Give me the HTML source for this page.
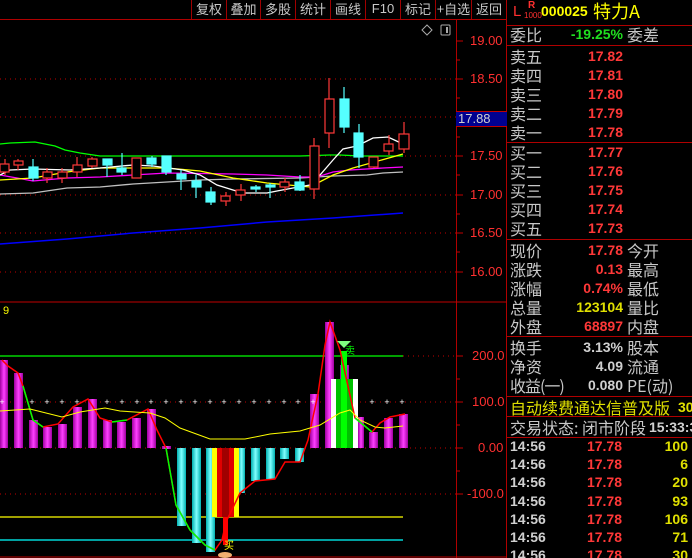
<!DOCTYPE html>
<html><head><meta charset="utf-8"><style>
*{margin:0;padding:0;box-sizing:border-box}
html,body{width:692px;height:558px;overflow:hidden}
body{background:#000;position:relative;font-family:"Liberation Sans","Noto Sans CJK SC",sans-serif}
.t{position:absolute;white-space:nowrap}
.lb{color:#c8c8c8;font-size:16px;line-height:19px;font-family:"Noto Sans CJK SC","WenQuanYi Zen Hei",sans-serif}
.v{position:absolute;white-space:nowrap;font-weight:bold;font-size:14px;line-height:19px;text-align:right;width:80px;left:543px}
.r{color:#ff3838}.g{color:#20e020}.y{color:#e0e000}.w{color:#d0d0d0}
.btn{position:absolute;top:0;height:19px;color:#c8c8c8;font-size:13px;line-height:18px;text-align:center;border-left:1px solid #a00000;font-family:"Noto Sans CJK SC",sans-serif}
.hl{position:absolute;background:#b00000;height:1px}
.ax{position:absolute;color:#ff3030;font-size:13px;left:470px}
</style></head><body>
<div class="btn" style="left:191px;width:35px">复权</div>
<div class="btn" style="left:226px;width:34px">叠加</div>
<div class="btn" style="left:260px;width:35px">多股</div>
<div class="btn" style="left:295px;width:35px">统计</div>
<div class="btn" style="left:330px;width:35px">画线</div>
<div class="btn" style="left:365px;width:35px;font-family:'Liberation Sans',sans-serif">F10</div>
<div class="btn" style="left:400px;width:35px">标记</div>
<div class="btn" style="left:435px;width:36px">+自选</div>
<div class="btn" style="left:471px;width:35px">返回</div>
<div class="hl" style="left:0;top:19px;width:507px"></div>
<div style="position:absolute;left:506px;top:0;width:1px;height:558px;background:#b00000"></div>
<div style="position:absolute;left:456px;top:19px;width:1px;height:539px;background:#b00000"></div>

<svg width="507" height="558" style="position:absolute;left:0;top:0">
<g stroke="#c00000" stroke-dasharray="1,4" stroke-width="1">
<line x1="0" y1="79" x2="456" y2="79"/><line x1="0" y1="117" x2="456" y2="117"/><line x1="0" y1="156" x2="456" y2="156"/><line x1="0" y1="195" x2="456" y2="195"/><line x1="0" y1="233" x2="456" y2="233"/><line x1="0" y1="272" x2="456" y2="272"/>
<line x1="403" y1="356" x2="456" y2="356"/><line x1="0" y1="402" x2="456" y2="402"/><line x1="0" y1="448" x2="456" y2="448"/><line x1="0" y1="494" x2="456" y2="494"/>
</g>
<g stroke="#c00000"><line x1="456" y1="41" x2="463" y2="41"/><line x1="456" y1="60" x2="460" y2="60"/><line x1="456" y1="79" x2="463" y2="79"/><line x1="456" y1="98" x2="460" y2="98"/><line x1="456" y1="137" x2="460" y2="137"/><line x1="456" y1="156" x2="463" y2="156"/><line x1="456" y1="175" x2="460" y2="175"/><line x1="456" y1="195" x2="463" y2="195"/><line x1="456" y1="214" x2="460" y2="214"/><line x1="456" y1="233" x2="463" y2="233"/><line x1="456" y1="252" x2="460" y2="252"/><line x1="456" y1="272" x2="463" y2="272"/>
<line x1="456" y1="356" x2="463" y2="356"/><line x1="456" y1="379" x2="460" y2="379"/><line x1="456" y1="402" x2="463" y2="402"/><line x1="456" y1="425" x2="460" y2="425"/><line x1="456" y1="448" x2="463" y2="448"/><line x1="456" y1="471" x2="460" y2="471"/><line x1="456" y1="494" x2="463" y2="494"/>
<line x1="0" y1="302" x2="507" y2="302"/><line x1="0" y1="557" x2="507" y2="557"/></g>
<path d="M427 25 L432 30 L427 35 L422 30Z" fill="none" stroke="#aaa"/>
<rect x="441" y="25" width="9" height="10" rx="1" fill="none" stroke="#aaa"/><rect x="446" y="27" width="2" height="6" fill="#aaa"/>
<polyline fill="none" stroke="#0000ff" stroke-width="1.5" points="0,244 67,239 133,233 200,228 267,222 333,218 403,213"/>
<polyline fill="none" stroke="#c0c0c0" stroke-width="1.3" points="0,194 33,193 67,188 100,187 133,184 167,182 200,180 233,179 300,178 333,176 367,175 383,173 403,172"/>
<polyline fill="none" stroke="#ff00ff" stroke-width="1.3" points="0,175 17,178 33,181 67,178 100,177 133,175 167,173 233,174 267,175 300,177 317,177 333,172 350,170 383,168 403,167"/>
<polyline fill="none" stroke="#00ff00" stroke-width="1.3" points="0,144 10,143 35,142 45,144 55,146 65,150 80,153 100,156 300,156 330,155 340,155 360,156 403,156"/>
<polyline fill="none" stroke="#ffff00" stroke-width="1.3" points="0,180 33,178 67,172 100,168 167,168 200,171 233,178 267,183 310,187 333,175 353,168 403,154"/>
<polyline fill="none" stroke="#ffffff" stroke-width="1.3" points="0,175 10,170 33,169 70,170 100,168 133,165 153,166 183,170 200,175 217,185 233,190 243,193 267,193 277,191 293,188 310,185 320,175 333,160 343,149 357,146 373,138 388,137 403,144"/>
<g stroke="#ff3838" fill="#000" stroke-width="1.2">
<line x1="5" y1="159" x2="5" y2="175"/><rect x="0" y="164" width="9" height="8"/>
<line x1="18" y1="159" x2="18" y2="170"/><rect x="14" y="161" width="9" height="4"/>
<line x1="47" y1="168" x2="47" y2="183"/><rect x="43" y="172" width="9" height="6"/>
<line x1="62" y1="168" x2="62" y2="183"/><rect x="58" y="172" width="9" height="6"/>
<line x1="77" y1="157" x2="77" y2="177"/><rect x="73" y="165" width="9" height="7"/>
<line x1="92" y1="157" x2="92" y2="168"/><rect x="88" y="159" width="9" height="7"/>
<rect x="132" y="158" width="9" height="20"/>
<line x1="285" y1="178" x2="285" y2="192"/><rect x="280" y="182" width="9" height="5"/>
<line x1="226" y1="192" x2="226" y2="206"/><rect x="221" y="196" width="9" height="5"/>
<line x1="241" y1="184" x2="241" y2="201"/><rect x="236" y="190" width="9" height="5"/>
<line x1="314" y1="138" x2="314" y2="199"/><rect x="310" y="146" width="9" height="43"/>
<line x1="329" y1="78" x2="329" y2="148"/><rect x="325" y="99" width="9" height="34"/>
<line x1="374" y1="157" x2="374" y2="168"/><rect x="369" y="157" width="9" height="10"/>
<line x1="389" y1="135" x2="389" y2="155"/><rect x="384" y="144" width="9" height="7"/>
<line x1="404" y1="122" x2="404" y2="153"/><rect x="399" y="134" width="10" height="15"/>
</g>
<g stroke="#55ffff" fill="#55ffff" stroke-width="1.2">
<line x1="33" y1="159" x2="33" y2="181"/><rect x="29" y="167" width="9" height="11"/>
<line x1="107" y1="159" x2="107" y2="177"/><rect x="103" y="159" width="9" height="6"/>
<line x1="122" y1="153" x2="122" y2="175"/><rect x="117" y="168" width="9" height="4"/>
<line x1="152" y1="156" x2="152" y2="167"/><rect x="147" y="158" width="9" height="6"/>
<line x1="166" y1="156" x2="166" y2="175"/><rect x="162" y="156" width="9" height="16"/>
<line x1="181" y1="170" x2="181" y2="190"/><rect x="177" y="174" width="9" height="5"/>
<line x1="196" y1="175" x2="196" y2="198"/><rect x="192" y="181" width="9" height="6"/>
<line x1="211" y1="187" x2="211" y2="205"/><rect x="206" y="192" width="9" height="10"/>
<line x1="256" y1="185" x2="256" y2="192"/><rect x="251" y="187" width="9" height="2"/>
<line x1="270" y1="183" x2="270" y2="198"/><rect x="266" y="185" width="9" height="2"/>
<line x1="300" y1="175" x2="300" y2="191"/><rect x="295" y="182" width="9" height="8"/>
<line x1="344" y1="87" x2="344" y2="133"/><rect x="340" y="99" width="9" height="28"/>
<line x1="359" y1="124" x2="359" y2="168"/><rect x="354" y="133" width="9" height="24"/>
</g>
<line x1="0" y1="356" x2="403" y2="356" stroke="#00ff00" stroke-width="1.2"/>
<line x1="0" y1="517" x2="403" y2="517" stroke="#ffff00" stroke-width="1.2"/>
<line x1="0" y1="540" x2="403" y2="540" stroke="#00ffff" stroke-width="1.2"/>
<defs>
<linearGradient id="m"><stop offset="0" stop-color="#a000a0"/><stop offset=".5" stop-color="#ff40ff"/><stop offset="1" stop-color="#a000a0"/></linearGradient>
<linearGradient id="c"><stop offset="0" stop-color="#00b0b0"/><stop offset=".5" stop-color="#80ffff"/><stop offset="1" stop-color="#00b0b0"/></linearGradient>
</defs>
<g fill="url(#m)">
<rect x="0" y="360" width="8" height="88"/><rect x="14" y="373" width="9" height="75"/><rect x="29" y="420" width="9" height="28"/><rect x="43" y="427" width="9" height="21"/><rect x="58" y="424" width="9" height="24"/><rect x="73" y="407" width="9" height="41"/><rect x="88" y="399" width="9" height="49"/><rect x="103" y="420" width="9" height="28"/><rect x="117" y="422" width="9" height="26"/><rect x="132" y="418" width="9" height="30"/><rect x="147" y="409" width="9" height="39"/><rect x="162" y="446" width="9" height="3"/>
<rect x="310" y="394" width="9" height="54"/><rect x="325" y="322" width="9" height="126"/><rect x="340" y="365" width="9" height="83"/><rect x="358" y="417" width="6" height="31"/><rect x="369" y="432" width="9" height="16"/><rect x="384" y="418" width="9" height="30"/><rect x="399" y="414" width="9" height="34"/></g>
<g fill="url(#c)">
<rect x="177" y="448" width="9" height="78"/><rect x="192" y="448" width="9" height="95"/><rect x="206" y="448" width="9" height="104"/><rect x="221" y="448" width="9" height="45"/><rect x="238" y="448" width="7" height="45"/><rect x="251" y="448" width="9" height="33"/><rect x="266" y="448" width="9" height="31"/><rect x="280" y="448" width="9" height="11"/><rect x="295" y="448" width="9" height="14"/></g>
<rect x="212" y="448" width="27" height="69" fill="#ffff00"/><rect x="217" y="448" width="17" height="69" fill="#e00000"/><rect x="222" y="448" width="7" height="69" fill="#a00000"/>
<rect x="331" y="379" width="27" height="69" fill="#ffffff"/><rect x="336" y="379" width="17" height="69" fill="#00c000"/><rect x="341" y="351" width="6" height="97" fill="#00ff00"/>
<rect x="223" y="517" width="5" height="28" fill="#ff0000"/>
<polyline fill="none" stroke="#ff0000" stroke-width="1.5" points="2,360 8,366 18,373 23,386 33,420 43,427 58,424 73,407 88,399 100,418 112,422 127,420 148,409 157,430 166,448 176,505 190,530 205,545 215,550 222,540 226,522 240,493 255,481 275,479 285,462 300,462 308,440 318,394 325,345 330,322 340,350 355,418 372,432 380,423 390,417 405,414"/>
<g fill="none" stroke="#00ff00" stroke-width="1.5"><polyline points="23,386 33,420 43,427"/><polyline points="112,422 127,420"/><polyline points="166,448 176,505 190,530 205,545 215,550"/><polyline points="355,418 372,432"/></g>
<polyline fill="none" stroke="#ffff00" stroke-width="1" points="0,411 30,409 62,417 80,412 105,408 120,411 150,413 165,418 180,428 210,439 245,439 270,434 300,431 320,425 340,413 350,410 360,420 375,427 385,428 403,426"/>
<g fill="#fff" font-size="9" font-family="Liberation Sans" text-anchor="middle">
<text x="2" y="405">+</text><text x="32" y="405">+</text><text x="47" y="405">+</text><text x="62" y="405">+</text><text x="77" y="405">+</text><text x="107" y="405">+</text><text x="122" y="405">+</text><text x="137" y="405">+</text><text x="151" y="405">+</text><text x="166" y="405">+</text><text x="181" y="405">+</text><text x="195" y="405">+</text><text x="210" y="405">+</text><text x="224" y="405">+</text><text x="239" y="405">+</text><text x="254" y="405">+</text><text x="269" y="405">+</text><text x="284" y="405">+</text><text x="298" y="405">+</text><text x="313" y="405">+</text><text x="372" y="405">+</text><text x="387" y="405">+</text><text x="402" y="405">+</text></g>
<path d="M337 341 L351 341 L344 348Z" fill="#80ff80"/>
<text x="345" y="354" fill="#00ff00" font-size="10" font-family="Noto Sans CJK SC">卖</text>
<text x="224" y="549" fill="#ffff00" font-size="10" font-family="Noto Sans CJK SC">买</text>
<ellipse cx="225" cy="555" rx="7" ry="3" fill="#f0b070"/>
<text x="3" y="314" fill="#ffff00" font-size="11" font-family="Liberation Sans">9</text>
</svg>

<div class="ax" style="top:33px">19.00</div><div class="ax" style="top:71px">18.50</div>
<div style="position:absolute;left:456px;top:111px;width:51px;height:16px;background:#000090;border-top:1px solid #c00000;border-bottom:1px solid #c00000;color:#d0d0d0;font-size:13px;line-height:14px;padding-left:2px">17.88</div>
<div class="ax" style="top:148px">17.50</div><div class="ax" style="top:187px">17.00</div><div class="ax" style="top:225px">16.50</div><div class="ax" style="top:264px">16.00</div>
<div class="ax" style="top:348px;left:472px">200.0</div><div class="ax" style="top:394px;left:472px">100.0</div><div class="ax" style="top:440px;left:478px">0.00</div><div class="ax" style="top:486px;left:467px">-100.0</div>

<div class="t" style="left:513px;top:3px;color:#ff3030;font-size:15px">L</div>
<div class="t" style="left:528px;top:0;color:#ff3030;font-size:10px;font-weight:bold">R</div>
<div class="t" style="left:524px;top:11px;color:#ff3030;font-size:8px">1000</div>
<div class="t" style="left:541px;top:3px;color:#ffff00;font-size:14px;font-weight:bold">000025</div>
<div class="t" style="left:593px;top:0;color:#ffff00;font-size:18px;line-height:22px;font-family:'Noto Sans CJK SC',sans-serif">特力A</div>
<div class="hl" style="left:506px;top:25px;width:186px"></div>
<div class="t lb" style="left:510px;top:25px">委比</div><div class="v g" style="top:25px">-19.25%</div><div class="t lb" style="left:627px;top:25px">委差</div>
<div class="hl" style="left:506px;top:45px;width:186px"></div>
<div class="t lb" style="left:510px;top:47px">卖五</div><div class="v r" style="top:47px">17.82</div>
<div class="t lb" style="left:510px;top:66px">卖四</div><div class="v r" style="top:66px">17.81</div>
<div class="t lb" style="left:510px;top:85px">卖三</div><div class="v r" style="top:85px">17.80</div>
<div class="t lb" style="left:510px;top:104px">卖二</div><div class="v r" style="top:104px">17.79</div>
<div class="t lb" style="left:510px;top:123px">卖一</div><div class="v r" style="top:123px">17.78</div>
<div class="hl" style="left:506px;top:142px;width:186px"></div>
<div class="t lb" style="left:510px;top:143px">买一</div><div class="v r" style="top:143px">17.77</div>
<div class="t lb" style="left:510px;top:162px">买二</div><div class="v r" style="top:162px">17.76</div>
<div class="t lb" style="left:510px;top:181px">买三</div><div class="v r" style="top:181px">17.75</div>
<div class="t lb" style="left:510px;top:200px">买四</div><div class="v r" style="top:200px">17.74</div>
<div class="t lb" style="left:510px;top:219px">买五</div><div class="v r" style="top:219px">17.73</div>
<div class="hl" style="left:506px;top:239px;width:186px"></div>
<div class="t lb" style="left:510px;top:241px">现价</div><div class="v r" style="top:241px">17.78</div><div class="t lb" style="left:627px;top:241px">今开</div>
<div class="t lb" style="left:510px;top:260px">涨跌</div><div class="v r" style="top:260px">0.13</div><div class="t lb" style="left:627px;top:260px">最高</div>
<div class="t lb" style="left:510px;top:279px">涨幅</div><div class="v r" style="top:279px">0.74%</div><div class="t lb" style="left:627px;top:279px">最低</div>
<div class="t lb" style="left:510px;top:298px">总量</div><div class="v y" style="top:298px">123104</div><div class="t lb" style="left:627px;top:298px">量比</div>
<div class="t lb" style="left:510px;top:317px">外盘</div><div class="v r" style="top:317px">68897</div><div class="t lb" style="left:627px;top:317px">内盘</div>
<div class="hl" style="left:506px;top:336px;width:186px"></div>
<div class="t lb" style="left:510px;top:338px">换手</div><div class="v w" style="top:338px">3.13%</div><div class="t lb" style="left:627px;top:338px">股本</div>
<div class="t lb" style="left:510px;top:357px">净资</div><div class="v w" style="top:357px">4.09</div><div class="t lb" style="left:627px;top:357px">流通</div>
<div class="t lb" style="left:510px;top:376px;letter-spacing:-1px">收益(一)</div><div class="v w" style="top:376px">0.080</div><div class="t lb" style="left:627px;top:376px">PE(动)</div>
<div class="hl" style="left:506px;top:396px;width:186px"></div>
<div class="t lb" style="left:510px;top:398px;color:#e0e000">自动续费通达信普及版</div><div class="t" style="left:678px;top:398px;color:#e0e000;font-weight:bold;font-size:14px;line-height:19px">30</div>
<div class="hl" style="left:506px;top:416px;width:186px"></div>
<div class="t lb" style="left:510px;top:418px">交易状态: 闭市阶段</div><div class="t" style="left:649px;top:418px;color:#d0d0d0;font-weight:bold;font-size:14px;line-height:19px">15:33:3</div>
<div class="hl" style="left:506px;top:437px;width:186px"></div>
<div style="position:absolute;left:510px;top:437px;width:182px;font-weight:bold;font-size:14px;line-height:18.2px">
<div style="display:flex"><span class="w" style="width:62px">14:56</span><span class="r" style="width:50px;text-align:right">17.78</span><span class="y" style="width:66px;text-align:right">100</span></div>
<div style="display:flex"><span class="w" style="width:62px">14:56</span><span class="r" style="width:50px;text-align:right">17.78</span><span class="y" style="width:66px;text-align:right">6</span></div>
<div style="display:flex"><span class="w" style="width:62px">14:56</span><span class="r" style="width:50px;text-align:right">17.78</span><span class="y" style="width:66px;text-align:right">20</span></div>
<div style="display:flex"><span class="w" style="width:62px">14:56</span><span class="r" style="width:50px;text-align:right">17.78</span><span class="y" style="width:66px;text-align:right">93</span></div>
<div style="display:flex"><span class="w" style="width:62px">14:56</span><span class="r" style="width:50px;text-align:right">17.78</span><span class="y" style="width:66px;text-align:right">106</span></div>
<div style="display:flex"><span class="w" style="width:62px">14:56</span><span class="r" style="width:50px;text-align:right">17.78</span><span class="y" style="width:66px;text-align:right">71</span></div>
<div style="display:flex"><span class="w" style="width:62px">14:56</span><span class="r" style="width:50px;text-align:right">17.78</span><span class="y" style="width:66px;text-align:right">30</span></div>
</div>
</body></html>
